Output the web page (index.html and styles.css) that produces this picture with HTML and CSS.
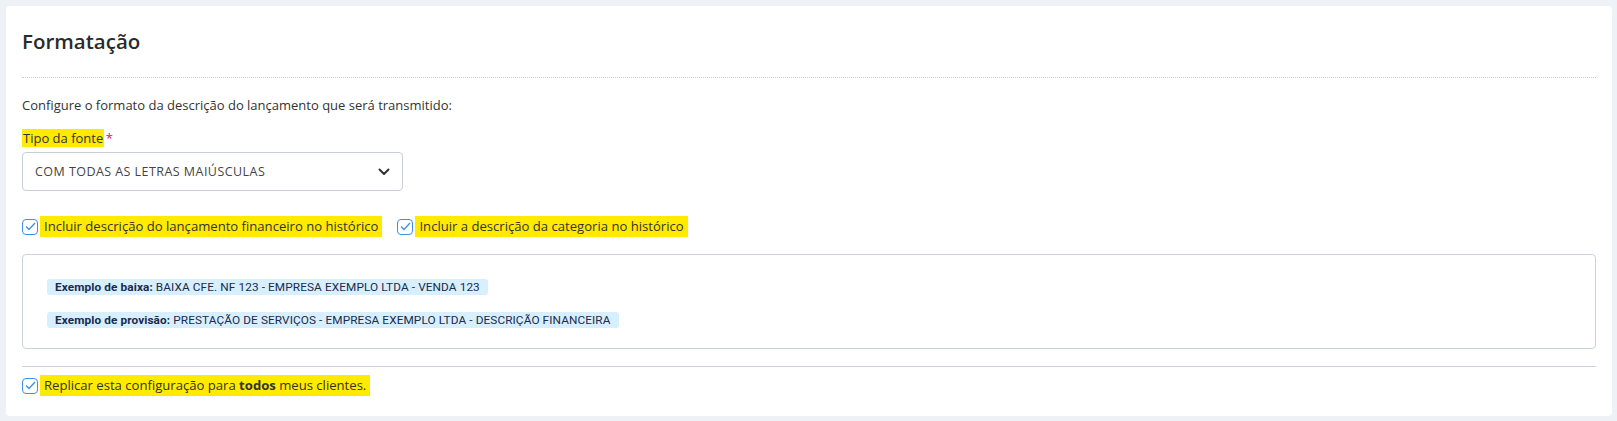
FILE: index.html
```html
<!DOCTYPE html>
<html lang="pt-BR">

<head>
    <meta charset="UTF-8">
    <meta name="viewport" content="width=device-width, initial-scale=1.0">
    <title>Formatação</title>
    <link rel="stylesheet" href="styles.css">
</head>

<body>

    <div class="card">
        <h2 class="card-title">Formatação</h2>
        <hr class="dotted">

        <p class="intro">Configure o formato da descrição do lançamento que será transmitido:</p>

        <label class="field-label"><span class="mark">Tipo da fonte</span> <span class="req">*</span></label>
        <div class="select">
            <span>COM TODAS AS LETRAS MAIÚSCULAS</span>
            <svg width="12" height="8" viewBox="0 0 12 8"><path d="M1.5 1.5 L6 6 L10.5 1.5" fill="none" stroke="#333" stroke-width="2" stroke-linecap="round" stroke-linejoin="round"/></svg>
        </div>

        <div class="checks">
            <label class="check">
                <span class="box"><svg width="11" height="9" viewBox="0 0 11 9"><path d="M1 4.5 L4 7.5 L10 1" fill="none" stroke="#3d8fe6" stroke-width="1.3"/></svg></span>
                <span class="mark">Incluir descrição do lançamento financeiro no histórico</span>
            </label>
            <label class="check">
                <span class="box"><svg width="11" height="9" viewBox="0 0 11 9"><path d="M1 4.5 L4 7.5 L10 1" fill="none" stroke="#3d8fe6" stroke-width="1.3"/></svg></span>
                <span class="mark">Incluir a descrição da categoria no histórico</span>
            </label>
        </div>

        <div class="examples">
            <div class="pill"><b>Exemplo de baixa:</b> BAIXA CFE. NF 123 - EMPRESA EXEMPLO LTDA - VENDA 123</div>
            <div class="pill"><b>Exemplo de provisão:</b> PRESTAÇÃO DE SERVIÇOS - EMPRESA EXEMPLO LTDA - DESCRIÇÃO FINANCEIRA</div>
        </div>

        <hr class="solid">

        <label class="check">
            <span class="box"><svg width="11" height="9" viewBox="0 0 11 9"><path d="M1 4.5 L4 7.5 L10 1" fill="none" stroke="#3d8fe6" stroke-width="1.3"/></svg></span>
            <span class="mark">Replicar esta configuração para <b>todos</b> meus clientes.</span>
        </label>
    </div>

</body>

</html>
```

FILE: styles.css
```css
body {
    margin: 0;
    padding: 6px 5px 5px 6px;
    background-color: #eef1f6;
    font-family: "Open Sans", Arial, sans-serif;
    color: #333;
}

.card {
    background: white;
    border-radius: 4px;
    padding: 0 16px 21px 16px;
    height: 410px;
    box-sizing: border-box;
}

.card-title {
    margin: 0;
    padding-top: 24px;
    font-size: 20.5px;
    font-weight: 600;
    line-height: 22px;
    color: #2b2b2b;
}

hr {
    border: none;
    margin: 0;
}

.dotted {
    margin-top: 25px;
    border-top: 1px dotted #c6ccd6;
}

.intro {
    margin: 17px 0 0 0;
    font-size: 13px;
    line-height: 20px;
}

.field-label {
    display: block;
    margin-top: 13px;
    font-size: 13px;
    line-height: 21px;
}

.mark {
    background: #ffea00;
    padding: 0 1px;
}

.req {
    color: #d4145a;
    margin-left: -2px;
}

.select {
    display: flex;
    justify-content: space-between;
    align-items: center;
    width: 381px;
    height: 39px;
    margin-top: 3px;
    padding: 0 12px 0 12px;
    box-sizing: border-box;
    border: 1px solid #c9ced8;
    border-radius: 4px;
    font-size: 12.5px;
    letter-spacing: 0.45px;
    color: #444;
}

.checks {
    display: flex;
    gap: 15px;
    margin-top: 25px;
}

.check {
    display: flex;
    align-items: center;
    gap: 2px;
    font-size: 13.1px;
    line-height: 21px;
}

.check .mark {
    padding: 0 4px;
}

.box {
    display: inline-flex;
    align-items: center;
    justify-content: center;
    width: 16px;
    height: 16px;
    border: 1px solid #3d8fe6;
    border-radius: 4px;
    box-sizing: border-box;
}

.examples {
    margin-top: 17px;
    height: 95px;
    box-sizing: border-box;
    border: 1px solid #cdd3dc;
    border-radius: 4px;
    padding: 24px 20px 0 24px;
    display: flex;
    flex-direction: column;
    align-items: flex-start;
    gap: 17px;
}

.pill {
    background: #d7efff;
    border-radius: 3px;
    padding: 0 8px;
    font-family: "Roboto", Arial, sans-serif;
    font-size: 11.8px;
    line-height: 16px;
    letter-spacing: 0.1px;
    color: #1a2b4c;
}

.pill b {
    font-weight: 700;
}

.solid {
    margin-top: 17px;
    border-top: 1px solid #cdd3dc;
    margin-bottom: 8px;
}
```
